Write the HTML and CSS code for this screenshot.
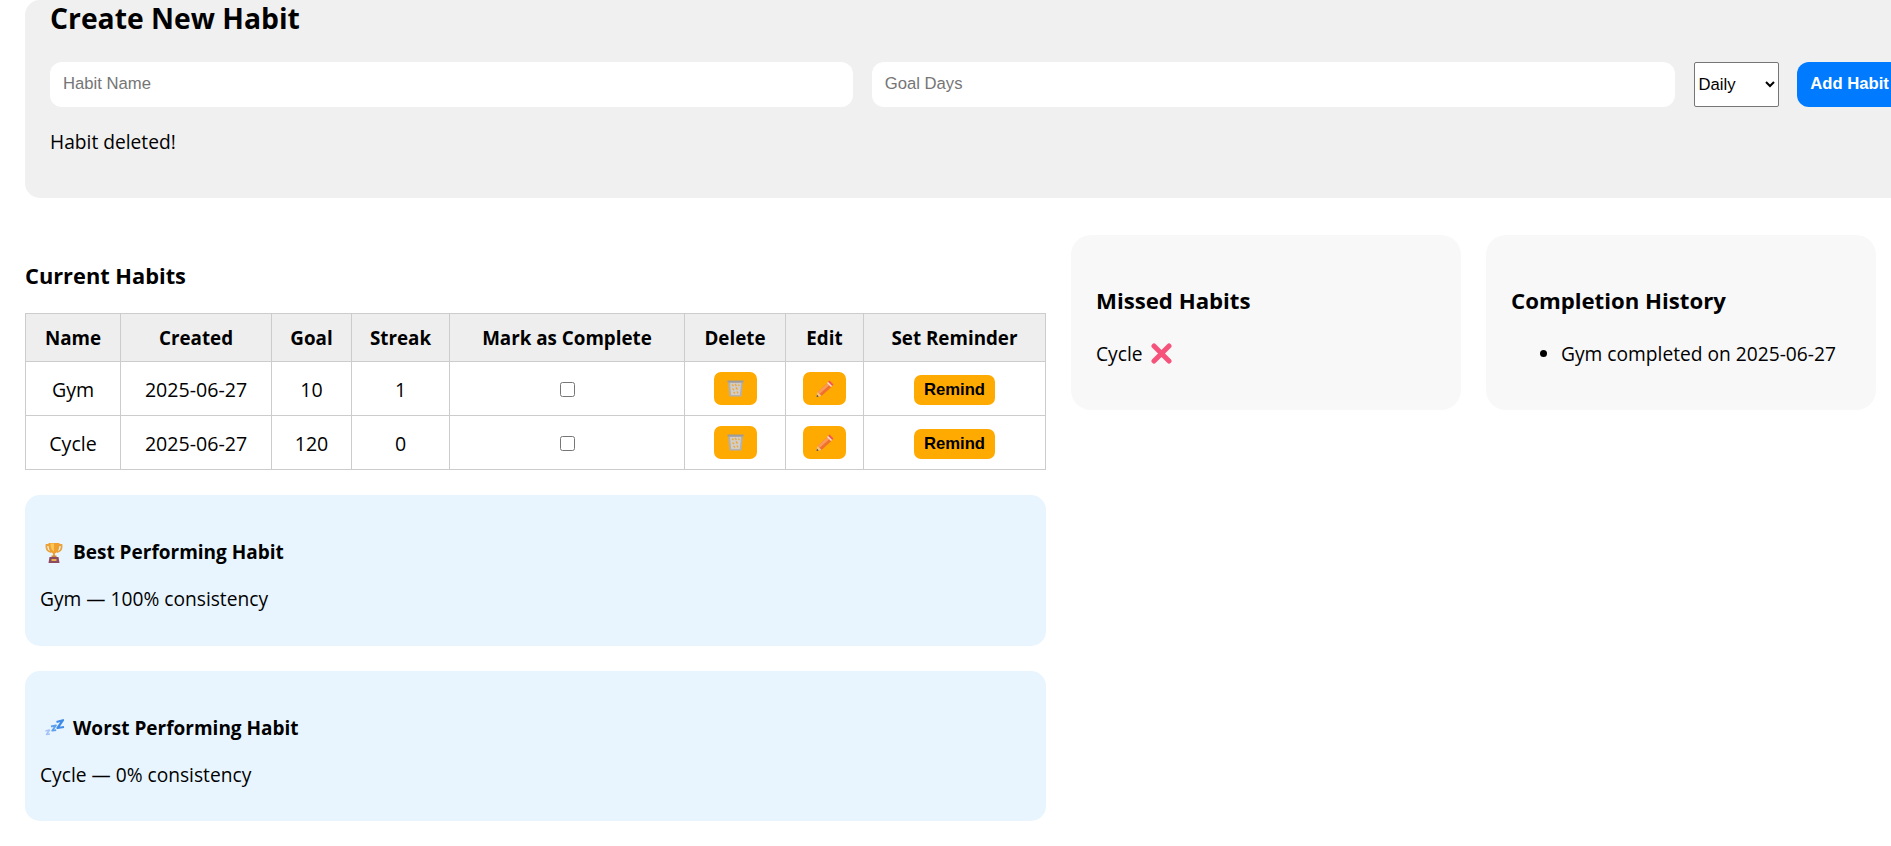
FILE: index.html
```html
<!DOCTYPE html>
<html lang="en">
<head>
  <meta charset="UTF-8" />
  <meta name="viewport" content="width=device-width, initial-scale=1.0"/>
  <title>Habit Tracker</title>
  <link rel="stylesheet" href="styles.css">
</head>
<body>
  <section class="create-panel">
    <h2>Create New Habit</h2>
    <div class="form-row">
      <input type="text" placeholder="Habit Name">
      <input type="text" placeholder="Goal Days">
      <select>
        <option>Daily</option>
        <option>Weekly</option>
      </select>
      <button class="add-btn">Add Habit</button>
    </div>
    <p class="message">Habit deleted!</p>
  </section>

  <main class="dashboard">
    <div class="left-col">
      <h3 class="table-title">Current Habits</h3>
      <table>
        <colgroup>
          <col class="col-name"><col class="col-created"><col class="col-goal"><col class="col-streak">
          <col class="col-mark"><col class="col-delete"><col class="col-edit"><col class="col-remind">
        </colgroup>
        <thead>
          <tr>
            <th>Name</th>
            <th>Created</th>
            <th>Goal</th>
            <th>Streak</th>
            <th>Mark as Complete</th>
            <th>Delete</th>
            <th>Edit</th>
            <th>Set Reminder</th>
          </tr>
        </thead>
        <tbody>
          <tr>
            <td class="text-cell">Gym</td>
            <td class="text-cell">2025-06-27</td>
            <td class="text-cell">10</td>
            <td class="text-cell">1</td>
            <td><input type="checkbox"></td>
            <td>
              <button class="icon-btn" aria-label="Delete">
                <svg width="17" height="17" viewBox="0 0 17 17"><use href="#trash"/></svg>
              </button>
            </td>
            <td>
              <button class="icon-btn" aria-label="Edit">
                <svg width="18" height="17" viewBox="0 0 18 17"><use href="#pencil"/></svg>
              </button>
            </td>
            <td><button class="remind-btn">Remind</button></td>
          </tr>
          <tr>
            <td class="text-cell">Cycle</td>
            <td class="text-cell">2025-06-27</td>
            <td class="text-cell">120</td>
            <td class="text-cell">0</td>
            <td><input type="checkbox"></td>
            <td>
              <button class="icon-btn" aria-label="Delete">
                <svg width="17" height="17" viewBox="0 0 17 17"><use href="#trash"/></svg>
              </button>
            </td>
            <td>
              <button class="icon-btn" aria-label="Edit">
                <svg width="18" height="17" viewBox="0 0 18 17"><use href="#pencil"/></svg>
              </button>
            </td>
            <td><button class="remind-btn">Remind</button></td>
          </tr>
        </tbody>
      </table>

      <div class="stat-card">
        <h4>
          <span class="stat-icon">
            <svg width="18" height="21" viewBox="0 0 18 21">
              <path d="M4 3H1.500C1 7 3 9.500 6 10M14 3h2.500C17 7 15 9.500 12 10" fill="none" stroke="#eaa33c" stroke-width="1.800"/>
              <path d="M3.500 1h11c.3 5-1 9-4.500 10.500v2.500H8v-2.500C4.500 10 3.200 6 3.500 1z" fill="#f0a02e"/>
              <path d="M5.500 1.500h3.500v8C6.500 8.500 5.300 5 5.500 1.500z" fill="#fbc654"/>
              <rect x="6.500" y="13.500" width="5" height="2" fill="#c98a3c"/>
              <path d="M4.500 15h9l1 6h-11z" fill="#8d4a60"/>
              <rect x="6.500" y="17" width="5" height="2" fill="#e9b04c"/>
            </svg>
          </span>
          Best Performing Habit
        </h4>
        <p>Gym — 100% consistency</p>
      </div>

      <div class="stat-card">
        <h4>
          <span class="stat-icon">
            <svg width="21" height="17" viewBox="0 0 21 17">
              <path d="M12.500 3 19 1.200 13.500 9 20 8" fill="none" stroke="#3f8be8" stroke-width="2.200" stroke-linejoin="round"/>
              <path d="M7 7.500l5-1.200-3.800 5.400 4-.6" fill="none" stroke="#5f9ff0" stroke-width="1.800" stroke-linejoin="round"/>
              <path d="M1.500 12l4-1-3 4.500 3.500-.5" fill="none" stroke="#a5c3f8" stroke-width="1.500" stroke-linejoin="round"/>
            </svg>
          </span>
          Worst Performing Habit
        </h4>
        <p>Cycle — 0% consistency</p>
      </div>
    </div>

    <div class="side-card">
      <h3>Missed Habits</h3>
      <p class="missed">Cycle
        <svg width="21" height="21" viewBox="0 0 21 21">
          <path d="M3 3l15 15M18 3L3 18" stroke="#f5527c" stroke-width="5" stroke-linecap="round"/>
        </svg>
      </p>
    </div>

    <div class="side-card">
      <h3>Completion History</h3>
      <ul>
        <li>Gym completed on 2025-06-27</li>
      </ul>
    </div>
  </main>

  <svg class="icon-defs" width="0" height="0">
    <defs>
      <g id="trash">
        <path d="M1 1h15l-1.500 15.500h-12z" fill="#b4b0ae"/>
        <path d="M3 3h11l-1.200 12h-8.600z" fill="#d2cdc6"/>
        <path d="M5 4.500l1.500 1.500M8 4l1.500 2M11.500 4.500l.8 1.500M5.500 8.500l1.500 1.500M9 7.500l1.500 2M6.500 12l1.500 1.500M10 11.500l1 1.800" stroke="#eaa840" stroke-width="1.400"/>
        <rect x="0.500" y="0.500" width="16" height="2" fill="#9e9c9b"/>
      </g>
      <g id="pencil">
        <path d="M11.500 3 15.500 7 5.500 16 1.500 12z" fill="#f0702f"/>
        <path d="M11.500 3 13.500 5 3.500 14 1.500 12z" fill="#fb9a55"/>
        <path d="M13.500.5 17.500 4.500 16 6 12 2z" fill="#f4555a"/>
        <path d="M12 2 16 6 15 7 11 3z" fill="#f3e3dc"/>
        <path d="M1.500 12 5.500 16 .5 17z" fill="#f0c48c"/>
        <path d="M1 14.800 2.700 16.500 .5 17z" fill="#4a3a30"/>
      </g>
    </defs>
  </svg>
</body>
</html>
```

FILE: styles.css
```css
html, body {
  margin: 0;
  padding: 0;
  overflow: hidden;
  background-color: #fff;
}
body {
  font-family: "Open Sans", "Noto Sans", sans-serif;
  font-size: 19.2px;
  line-height: 27px;
  color: #000;
  width: 1891px;
  height: 846px;
}
.create-panel {
  width: 1900px;
  margin-left: 25px;
  padding: 0 25px 43px;
  box-sizing: border-box;
  background-color: #f0f0f0;
  border-radius: 15px;
}
.create-panel h2 {
  margin: 0 0 26px;
  font-size: 28.3px;
  line-height: 36px;
}
.form-row {
  display: flex;
  gap: 18.75px;
  height: 45px;
}
.form-row input {
  flex: 0 0 803px;
  box-sizing: border-box;
  border: none;
  border-radius: 12px;
  padding: 0 13px 2px;
  font-family: "Liberation Sans", Arial, sans-serif;
  font-size: 16.67px;
}
.form-row input::placeholder {
  color: #757575;
}
.form-row select {
  flex: 0 0 85px;
  box-sizing: border-box;
  background-color: #fff;
  color: #000;
  border: 1px solid #767676;
  border-radius: 2px;
  font-family: "Liberation Sans", Arial, sans-serif;
  font-size: 16.67px;
}
.add-btn {
  flex: 0 0 auto;
  border: none;
  border-radius: 12px;
  padding: 0 13px 2px;
  background-color: #007bff;
  color: #fff;
  font-family: "Liberation Sans", Arial, sans-serif;
  font-size: 16.67px;
  font-weight: bold;
  white-space: nowrap;
}
.message {
  margin: 21px 0 0;
}
.dashboard {
  display: flex;
  align-items: flex-start;
  gap: 25px;
  margin: 37px 0 0 25px;
}
.left-col {
  flex: 0 0 1020px;
}
.table-title {
  margin: 27px 0 23px;
  font-size: 21.8px;
  line-height: 28px;
}
table {
  border-collapse: collapse;
  table-layout: fixed;
  width: 1020px;
  margin-bottom: 25px;
}
.col-name { width: 95px; }
.col-created { width: 151px; }
.col-goal { width: 80px; }
.col-streak { width: 98px; }
.col-mark { width: 235px; }
.col-delete { width: 101px; }
.col-edit { width: 78px; }
.col-remind { width: 182px; }
th, td {
  box-sizing: border-box;
  border: 1px solid #ccc;
  padding: 0;
  text-align: center;
}
th {
  height: 48px;
  padding-top: 2px;
  background-color: #eee;
  font-size: 18.8px;
  font-weight: bold;
}
td {
  height: 54px;
}
.text-cell {
  padding-top: 2px;
  font-size: 19.6px;
}
td input[type="checkbox"] {
  width: 15px;
  height: 15px;
  margin: 0 0 3px;
  vertical-align: middle;
}
.icon-btn {
  display: inline-flex;
  align-items: center;
  justify-content: center;
  width: 43px;
  height: 33px;
  padding: 0;
  border: none;
  border-radius: 7px;
  background-color: #ffaa00;
  vertical-align: middle;
}
.remind-btn {
  width: 81px;
  height: 30px;
  margin-top: 3px;
  padding: 0;
  border: none;
  border-radius: 7px;
  background-color: #ffaa00;
  color: #000;
  font-family: "Liberation Sans", Arial, sans-serif;
  font-size: 16.67px;
  font-weight: bold;
  vertical-align: middle;
}
.stat-card {
  padding: 0 15px;
  height: 150.5px;
  box-sizing: border-box;
  margin-bottom: 25px;
  overflow: hidden;
  background-color: #e8f5ff;
  border-radius: 15px;
}
.stat-card h4 {
  display: flex;
  align-items: center;
  margin: 43px 0 19px;
  font-size: 19px;
  line-height: 28px;
}
.stat-icon {
  display: flex;
  justify-content: center;
  width: 28px;
  margin-right: 5px;
}
.stat-card p {
  margin: 0;
}
.side-card {
  flex: 0 0 390px;
  box-sizing: border-box;
  height: 175px;
  padding: 0 25px;
  overflow: hidden;
  background-color: #f8f8f8;
  border-radius: 20px;
}
.side-card h3 {
  margin: 52px 0 25px;
  font-size: 22.2px;
  line-height: 28px;
}
.missed {
  display: flex;
  align-items: center;
  gap: 8px;
  margin: 0;
}
.side-card ul {
  margin: 0;
  padding-left: 50px;
}
.icon-defs {
  display: block;
}
```
